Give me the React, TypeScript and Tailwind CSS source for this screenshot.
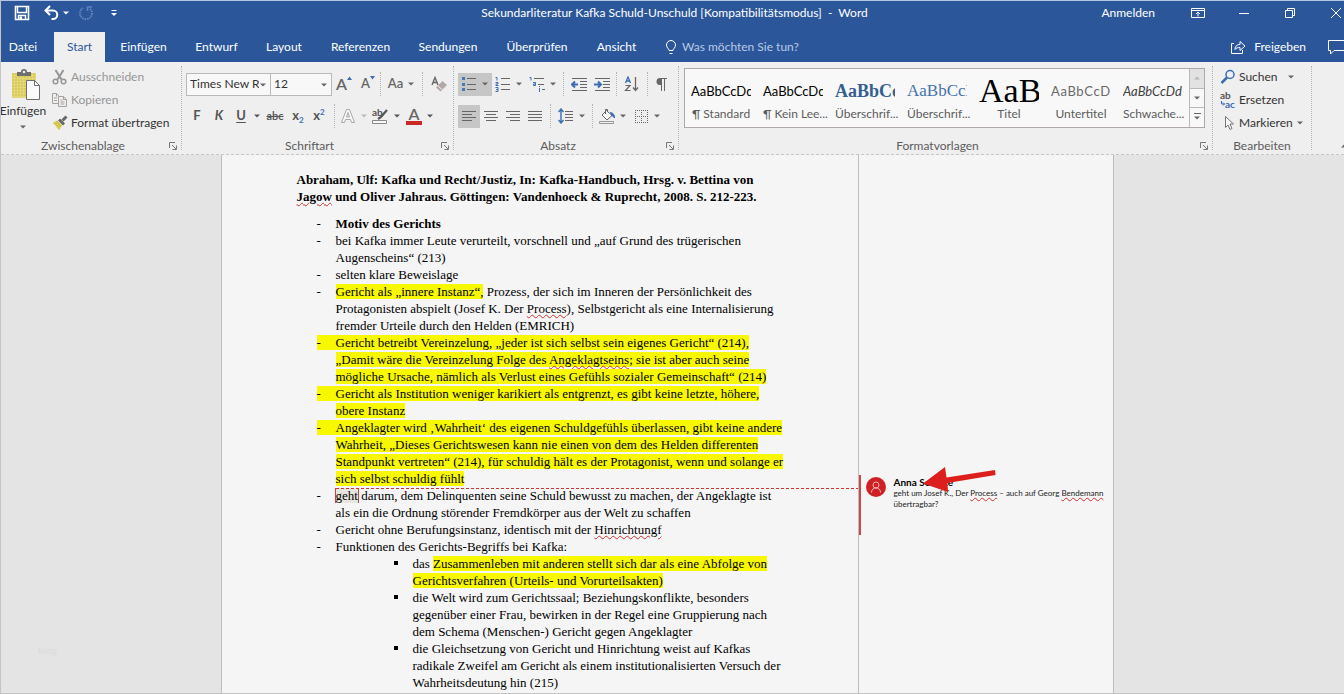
import type { ReactNode } from 'react'
import clsx from 'clsx'

// ── Small building blocks ──

function Chevron({ className }: { className?: string }) {
  return (
    <svg viewBox="0 0 8 8" className={clsx('h-2 w-2 shrink-0', className)}>
      <path d="M1 2.500h6L4 5.500z" fill="currentColor" />
    </svg>
  )
}

function Icon({ size = 16, className, children }: { size?: number; className?: string; children: ReactNode }) {
  return (
    <svg
      width={size}
      height={size}
      viewBox="0 0 16 16"
      fill="none"
      stroke="currentColor"
      strokeWidth="1"
      className={clsx('shrink-0', className)}
    >
      {children}
    </svg>
  )
}

function Divider({ className }: { className?: string }) {
  return <span className={clsx('h-6 w-0 shrink-0 border-l border-dotted border-[#b4b4b4]', className)} />
}

interface ToolProps {
  label: string
  className?: string
  active?: boolean
  children: ReactNode
}

function Tool({ label, className, active, children }: ToolProps) {
  return (
    <button
      type="button"
      aria-label={label}
      className={clsx('flex h-[23px] shrink-0 items-center justify-center', active && 'bg-[#c6c6c6]', className)}
    >
      {children}
    </button>
  )
}

/** Icon with a drop-down arrow */
function SplitTool({ label, active, children }: Omit<ToolProps, 'className'>) {
  return (
    <Tool label={label} active={active} className="w-[34px] gap-1">
      {children}
      <Chevron />
    </Tool>
  )
}

interface GroupProps {
  title: string
  launcher?: boolean
  className?: string
  children: ReactNode
}

function Group({ title, launcher = true, className, children }: GroupProps) {
  return (
    <section className={clsx('flex shrink-0 flex-col pt-[3px]', className)}>
      <div className="h-[73px]">{children}</div>
      <div className="flex h-4 items-center px-1 text-[#5c5c5c]">
        <span className={clsx('flex-1 text-center', launcher && 'pr-2')}>{title}</span>
        {launcher && (
          <button type="button" aria-label={`${title} Optionen`}>
            <svg width="8" height="8" viewBox="0 0 8 8" fill="none" stroke="#777">
              <path d="M.5 6V.5H6M3 3l4 4M7.500 3.500v4h-4" />
            </svg>
          </button>
        )}
      </div>
    </section>
  )
}

// ── Title bar ──

function TitleBar() {
  return (
    <div className="-mr-[15px] flex h-6 items-center">
      <div className="flex flex-1 items-center pl-[13px]">
        <button type="button" aria-label="Speichern">
          <Icon>
            <path d="M1.500 1.500h13v13h-13z" strokeWidth="1.600" />
            <path d="M3.500 2v5.500h9V2M4.500 14.500v-4h7v4" strokeWidth="1.400" />
            <path d="M5.500 11.500h2.500v3H5.500z" fill="currentColor" stroke="none" />
          </Icon>
        </button>
        <button type="button" aria-label="Rückgängig" className="ml-3.5 flex items-center gap-0.5">
          <Icon>
            <path d="M2 5.500h7a4 4 0 0 1 0 8.500H7.500" strokeWidth="2" />
            <path d="M6 1L1.500 5.500 6 10" strokeWidth="2" />
          </Icon>
          <Chevron />
        </button>
        <button type="button" aria-label="Wiederholen" className="ml-2 text-[#5f83bd]">
          <Icon>
            <path d="M5 3a6 6 0 1 0 6.500.3" strokeWidth="2" strokeDasharray="1.500 .8" />
            <path d="M9.500 6V2H14" strokeWidth="1.600" />
          </Icon>
        </button>
        <button type="button" aria-label="Symbolleiste anpassen" className="ml-3">
          <Icon>
            <path d="M5.500 5.500h5" />
            <path d="M5 8h6l-3 3z" fill="currentColor" stroke="none" />
          </Icon>
        </button>
      </div>
      <h1 className="mr-6 whitespace-pre">Sekundarliteratur Kafka Schuld-Unschuld [Kompatibilitätsmodus]  -  Word</h1>
      <div className="flex flex-1 items-center justify-end">
        <button type="button" className="mr-5">Anmelden</button>
        <button type="button" aria-label="Menüband-Anzeigeoptionen" className="flex w-[46px] justify-center">
          <Icon>
            <path d="M1.500 3.500h13v9h-13zM1.500 5.500h13M8 11.500v-4.500M6 9l2-2 2 2" />
          </Icon>
        </button>
        <button type="button" aria-label="Minimieren" className="flex w-[46px] justify-center">
          <Icon>
            <path d="M3 8.500h10" />
          </Icon>
        </button>
        <button type="button" aria-label="Wiederherstellen" className="flex w-[46px] justify-center">
          <Icon>
            <path d="M3.500 5.500h7v7h-7zM5.500 5.500v-2h7v7h-2" />
          </Icon>
        </button>
        <button type="button" aria-label="Schließen" className="flex w-[46px] justify-center">
          <Icon>
            <path d="M3 3l10 10M13 3L3 13" />
          </Icon>
        </button>
      </div>
    </div>
  )
}

// ── Tabs ──

const TABS = [
  { name: 'Datei', width: 'w-[53px] pr-[9px]' },
  { name: 'Start', width: 'w-[51px]' },
  { name: 'Einfügen', width: 'w-[77px]' },
  { name: 'Entwurf', width: 'w-[69px]' },
  { name: 'Layout', width: 'w-[66px]' },
  { name: 'Referenzen', width: 'w-[87px]' },
  { name: 'Sendungen', width: 'w-[88px]' },
  { name: 'Überprüfen', width: 'w-[90px]' },
  { name: 'Ansicht', width: 'w-[69px]' },
]

function TabBar() {
  return (
    <nav className="mt-[7px] flex h-[30px] items-stretch">
      {TABS.map(tab => (
        <button
          key={tab.name}
          type="button"
          className={clsx('shrink-0 text-center', tab.width, tab.name === 'Start' && 'bg-[#efefef] text-[#2b579a]')}
        >
          {tab.name}
        </button>
      ))}
      <button type="button" className="ml-3 flex items-center gap-[3px] text-[#b9c9e2]">
        <Icon className="text-white">
          <path d="M6 11.500c0-2-2.500-2.500-2.500-5.500a4.500 4.500 0 0 1 9 0c0 3-2.500 3.500-2.500 5.500zM6.500 14.500h3" />
        </Icon>
        Was möchten Sie tun?
      </button>
      <div className="-mr-[3px] flex flex-1 items-center justify-end">
        <button type="button" className="mr-[21px] flex items-center gap-2">
          <Icon>
            <path d="M4 4.500H1.500v10h11V11" />
            <path d="M5 10.500c0-3.500 2-5 5-5v-3l5 4.500-5 4.500V8.500c-2.500 0-4 .5-5 2z" />
          </Icon>
          Freigeben
        </button>
        <button type="button" aria-label="Kommentare">
          <svg width="20" height="16" viewBox="0 0 20 16" fill="none" stroke="currentColor">
            <path d="M1.500 1.500h18v10H7l-3.500 3.500v-3.500h-2z" />
          </svg>
        </button>
      </div>
    </nav>
  )
}

// ── Ribbon groups ──

function ClipboardGroup() {
  return (
    <Group title="Zwischenablage" className="w-[180px]">
      <div className="flex">
        <button type="button" className="flex w-11 shrink-0 flex-col items-center pt-1">
          <svg width="30" height="32" viewBox="0 0 30 32" className="ml-1 shrink-0">
            <path d="M2 4h24v25H2z" fill="#e3d77c" />
            <path d="M2 5h24M2 8h24M2 11h24M2 14h24M2 17h24M2 20h24M2 23h24M2 26h24" stroke="#d0bf35" strokeDasharray="2 1" />
            <path d="M7 3h4a3 3 0 0 1 6 0h4v4H7z" fill="#6f6f6f" />
            <circle cx="14" cy="3" r="1.300" fill="#efefef" />
            <path d="M16.500 11.500h8l5 5v14h-13z" fill="#fbfbfb" stroke="#6f6f6f" />
            <path d="M24.500 11.500v5h5" fill="none" stroke="#6f6f6f" />
          </svg>
          <span className="leading-5">Einfügen</span>
          <Chevron className="mt-0.5 text-[#666]" />
        </button>
        <div className="pl-[7px]">
          <button type="button" disabled className="flex h-[23px] items-center gap-[3px] whitespace-nowrap text-[#969696]">
            <Icon>
              <path d="M3.500 1l6 9.500M11.500 1L5.500 10.500" strokeWidth="2" />
              <circle cx="3.500" cy="12.500" r="2.300" strokeWidth="1.500" />
              <circle cx="11.500" cy="12.500" r="2.300" strokeWidth="1.500" />
            </Icon>
            Ausschneiden
          </button>
          <button type="button" disabled className="flex h-[23px] items-center gap-[3px] whitespace-nowrap text-[#969696]">
            <Icon className="text-[#a89f9f]">
              <path d="M6 11.500H.5v-10h4l3 3M4.500 1.500v3M2 6h3M2 8.500h3" />
              <path d="M6.500 4.500h5l3 3v7h-8zM11.500 4.500v3h3M8.500 8h2M8.500 10h4M8.500 12h4" fill="#efefef" />
            </Icon>
            Kopieren
          </button>
          <button type="button" className="flex h-[23px] items-center gap-[3px] whitespace-nowrap">
            <Icon>
              <path d="M1 8l4-2.500 5 5L7 15z" fill="#d3c244" stroke="none" />
              <path d="M2 9l4 4M3.500 7.500l4.500 5" stroke="#efe9b0" strokeDasharray="1 1" />
              <path d="M6 5.500l2-2 5 5-2 2z" fill="#666" stroke="none" />
              <path d="M10.500 5.500l4-4" stroke="#666" strokeWidth="3" />
            </Icon>
            Format übertragen
          </button>
        </div>
      </div>
    </Group>
  )
}

function FontGroup() {
  return (
    <Group title="Schriftart" className="w-[271px]">
      <div className="flex items-center pt-[7px] pl-1">
        <div className="relative h-[23px] w-[85px] border border-[#b9b9b9] bg-[#f8f8f8]">
          <select aria-label="Schriftart" className="h-full w-[72px] appearance-none overflow-hidden pl-[3px] text-clip">
            <option>Times New Roman</option>
          </select>
          <Chevron className="pointer-events-none absolute top-[7px] right-[3px] text-[#666]" />
        </div>
        <div className="relative h-[23px] w-[61px] border border-l-0 border-[#b9b9b9] bg-[#f8f8f8]">
          <select aria-label="Schriftgrad" className="h-full w-full appearance-none pl-[3px]">
            <option>12</option>
          </select>
          <Chevron className="pointer-events-none absolute top-[7px] right-[3px] text-[#666]" />
        </div>
        <Tool label="Schriftgrad vergrößern" className="w-6 text-[16px] font-semibold text-[#666]">
          A
          <svg width="5" height="4" viewBox="0 0 5 4" className="mb-3">
            <path d="M0 4l2.500-3.500L5 4z" fill="#3a6db3" />
          </svg>
        </Tool>
        <Tool label="Schriftgrad verkleinern" className="w-6 text-[13px] font-semibold text-[#666]">
          A
          <svg width="5" height="4" viewBox="0 0 5 4" className="mb-3">
            <path d="M0 0l2.500 3.500L5 0z" fill="#3a6db3" />
          </svg>
        </Tool>
        <Divider />
        <Tool label="Groß-/Kleinschreibung" className="w-[41px] gap-1 text-[13px] font-semibold text-[#666]">
          Aa
          <Chevron />
        </Tool>
        <Divider />
        <Tool label="Formatierung löschen" className="ml-1 w-[23px] text-[#666]">
          <Icon>
            <path d="M1 9L4 1.500 7 9M2 6.500h4" strokeWidth="1.400" />
            <path d="M5 11.500l6.500-6.500 4.500 4-6.500 6.500z" fill="#b3a8a6" stroke="none" />
            <path d="M6.500 9.500l4.500 4" stroke="#efefef" />
          </Icon>
        </Tool>
      </div>
      <div className="flex items-center pt-2 pl-1 text-[#555]">
        <Tool label="Fett" className="w-[22px] text-[13px] font-bold">F</Tool>
        <Tool label="Kursiv" className="w-[22px] text-[13px] font-bold italic">K</Tool>
        <Tool label="Unterstrichen" className="w-[22px] text-[13px] font-bold underline underline-offset-2">U</Tool>
        <Tool label="Unterstreichungsart" className="w-[10px]">
          <Chevron />
        </Tool>
        <Tool label="Durchgestrichen" className="w-[26px] text-[11px] font-semibold line-through">abc</Tool>
        <Tool label="Tiefgestellt" className="w-5 text-[13px] font-bold">
          x<span className="mt-2 text-[8px] text-[#3a6db3]">2</span>
        </Tool>
        <Tool label="Hochgestellt" className="w-[22px] text-[13px] font-bold">
          x<span className="mb-2 text-[8px] text-[#3a6db3]">2</span>
        </Tool>
        <Divider className="mx-1" />
        <Tool label="Texteffekte" className="w-[30px] gap-1 text-[#a8a8a8]">
          <Icon>
            <path d="M1.500 14.500L6.500 1.500h3l5 13h-3l-1-3h-5l-1 3zM6.500 9h3L8 4.500z" fill="#f8f8f8" />
          </Icon>
          <Chevron className="text-[#bbb]" />
        </Tool>
        <Tool label="Texthervorhebungsfarbe" className="w-[34px] gap-1">
          <svg width="18" height="18" viewBox="0 0 18 18" fill="none" stroke="#555" className="shrink-0">
            <text x="1" y="9" fontSize="10" fontWeight="700" fill="#555" stroke="none">ab</text>
            <path d="M16 3l-6 7-3 2" strokeWidth="2.200" />
            <path d="M1.500 13.500h14v3h-14z" stroke="#888" fill="#f8f8f8" />
          </svg>
          <Chevron />
        </Tool>
        <Tool label="Schriftfarbe" className="w-[34px] gap-1">
          <span className="flex h-[17px] w-4 items-center justify-center border-b-4 border-[#cc2727] text-[16px] leading-3 font-semibold text-[#666]">A</span>
          <Chevron />
        </Tool>
      </div>
    </Group>
  )
}

function ParagraphGroup() {
  return (
    <Group title="Absatz" className="w-[224px]">
      <div className="flex items-center pt-[7px] pl-1 text-[#666]">
        <SplitTool label="Aufzählungszeichen" active>
          <Icon>
            <path d="M6 2.500h9M6 8.500h9M6 13.500h9" />
            <path d="M1 1h3v3H1zM1 7h3v3H1zM1 12h3v3H1z" fill="#4a78b5" stroke="none" />
          </Icon>
        </SplitTool>
        <SplitTool label="Nummerierung">
          <Icon>
            <path d="M6 2.500h9M6 8.500h9M6 13.500h9" />
            <path d="M.5 1.500h1.500v3M.5 6.500h2.500v1.500H1v1.500h2.500M.5 11.500h2.500v4H.5M1 13.500h2" stroke="#3a6db3" />
          </Icon>
        </SplitTool>
        <SplitTool label="Liste mit mehreren Ebenen">
          <Icon>
            <path d="M5 2.500h10M9 8.500h6M13 13.500h3" />
            <path d="M.5 1.500h1.500v3M4 6.500h2.500v3H4.500v-1.500h2M10.500 10v1M10.500 12v4" stroke="#3a6db3" />
          </Icon>
        </SplitTool>
        <Divider className="mx-[3px]" />
        <Tool label="Einzug verkleinern" className="w-6">
          <Icon>
            <path d="M1 2.500h15M9 5.500h7M9 8.500h7M9 11.500h7M1 14.500h15" />
            <path d="M1 8.500h6M4 5.500l-3 3 3 3" stroke="#3a6db3" strokeWidth="2" />
          </Icon>
        </Tool>
        <Tool label="Einzug vergrößern" className="w-[22px]">
          <Icon>
            <path d="M1 2.500h15M9 5.500h7M9 8.500h7M9 11.500h7M1 14.500h15" />
            <path d="M0 8.500h6.500M4 5.500l3 3-3 3" stroke="#3a6db3" strokeWidth="2" />
          </Icon>
        </Tool>
        <Divider className="mx-[3px]" />
        <Tool label="Sortieren" className="w-6">
          <Icon>
            <path d="M1.500 7L4 1l2.500 6M2.500 5h3" stroke="#3a6db3" strokeWidth="1.300" />
            <path d="M1.500 9.500h4.500l-4.500 5h5" strokeWidth="1.200" />
            <path d="M11.500 1v13M9 11.500l2.500 3 2.500-3" strokeWidth="1.300" />
          </Icon>
        </Tool>
        <Divider className="mx-[3px]" />
        <Tool label="Formatierungszeichen" className="w-[22px]">
          <Icon>
            <path d="M7.500 2v13M10.500 2v13M13 2.500H6.500" />
            <path d="M7.500 2H6a3.500 3.500 0 0 0 0 7h1.500z" fill="currentColor" stroke="none" />
          </Icon>
        </Tool>
      </div>
      <div className="flex items-center pt-2 pl-1 text-[#666]">
        <Tool label="Linksbündig" active className="w-[22px]">
          <Icon>
            <path d="M1 3.500h14M1 6.500h10M1 9.500h14M1 12.500h10" />
          </Icon>
        </Tool>
        <Tool label="Zentriert" className="w-[22px]">
          <Icon>
            <path d="M1 3.500h14M3 6.500h10M1 9.500h14M3 12.500h10" />
          </Icon>
        </Tool>
        <Tool label="Rechtsbündig" className="w-[22px]">
          <Icon>
            <path d="M1 3.500h14M5 6.500h10M1 9.500h14M5 12.500h10" />
          </Icon>
        </Tool>
        <Tool label="Blocksatz" className="w-[22px]">
          <Icon>
            <path d="M1 3.500h14M1 6.500h14M1 9.500h14M1 12.500h14" />
          </Icon>
        </Tool>
        <Divider className="mx-1" />
        <SplitTool label="Zeilenabstand">
          <Icon>
            <path d="M7 3.500h8M7 6.500h8M7 9.500h8M7 12.500h8" />
            <path d="M3 1v14M.5 4L3 1l2.500 3M.5 12L3 15l2.500-3" stroke="#3a6db3" strokeWidth="1.400" />
          </Icon>
        </SplitTool>
        <Divider className="mx-[3px]" />
        <SplitTool label="Schattierung">
          <Icon>
            <path d="M3 7l4.500-4.500L13 7.500 8 12zM6.500 6V1.500h2V4" fill="#f8f8f8" />
            <path d="M11.500 4.500c3 .5 4 2.500 4 5.500-1-1-2-2-2.500-2.500z" fill="#3a6db3" stroke="#3a6db3" />
            <path d="M.5 13.500h14v2H.5z" stroke="#999" />
          </Icon>
        </SplitTool>
        <SplitTool label="Rahmen">
          <Icon>
            <path d="M2 2.500h13M2 14.500h13M2 8.500h13M2.500 2v13M14.500 2v13M8.500 2v13" strokeDasharray="1 1" />
          </Icon>
        </SplitTool>
      </div>
    </Group>
  )
}

const STYLES = [
  { name: '¶ Standard', sample: 'AaBbCcDd', className: 'text-[13px] text-black' },
  { name: '¶ Kein Lee...', sample: 'AaBbCcDd', className: 'text-[13px] text-black' },
  { name: 'Überschrif...', sample: 'AaBbCc', className: "font-['Liberation_Serif'] text-lg font-bold text-[#365f91]" },
  { name: 'Überschrif...', sample: 'AaBbCcD', className: "font-['Liberation_Serif'] text-[17px] text-[#4673ab]" },
  { name: 'Titel', sample: 'AaB', className: "font-['Liberation_Serif'] text-[34px] text-black" },
  { name: 'Untertitel', sample: 'AaBbCcDd', className: 'text-[13px] tracking-wider text-[#6a6a6a]' },
  { name: 'Schwache...', sample: 'AaBbCcDd', className: 'text-[13px] italic text-[#404040]' },
]

function StylesGroup() {
  return (
    <Group title="Formatvorlagen" className="min-w-0 flex-1">
      <div className="mt-[3px] mr-[7px] ml-[5px] flex h-[60px] border border-[#b0a8a8] bg-[#f8f8f8]">
        <div className="flex flex-1 overflow-hidden">
          {STYLES.map((style, i) => (
            <button key={i} type="button" className="w-[72px] shrink-0 px-1.5 pt-2">
              <span className={clsx('flex h-[22px] items-center overflow-hidden leading-[22px]', style.className)}>
                {style.sample}
              </span>
              <span className="block h-[22px] pt-1 whitespace-nowrap text-[#5c5c5c]">{style.name}</span>
            </button>
          ))}
        </div>
        <div className="flex w-[15px] shrink-0 flex-col border-l border-[#b9b9b9] text-[#666]">
          <button type="button" aria-label="Nach oben" className="flex flex-1 items-center justify-center bg-[#e2e2e2] text-[#b5b5b5]">
            <Chevron className="rotate-180" />
          </button>
          <button type="button" aria-label="Nach unten" className="flex flex-1 items-center justify-center border-y border-[#b9b9b9]">
            <Chevron />
          </button>
          <button type="button" aria-label="Weitere" className="flex flex-1 flex-col items-center justify-center">
            <span className="h-px w-[7px] bg-[#666]" />
            <Chevron />
          </button>
        </div>
      </div>
    </Group>
  )
}

function EditingGroup() {
  return (
    <Group title="Bearbeiten" launcher={false} className="w-[98px]">
      <div className="pl-[7px]">
        <button type="button" className="flex h-[23px] items-center gap-[3px]">
          <Icon className="text-[#3a6db3]">
            <circle cx="10" cy="5.500" r="4" strokeWidth="1.500" />
            <path d="M7 8.500L1.500 14" strokeWidth="2.500" />
          </Icon>
          Suchen
          <Chevron className="ml-1.5 text-[#666]" />
        </button>
        <button type="button" className="flex h-[23px] items-center gap-[3px]">
          <svg width="16" height="18" viewBox="0 0 16 18" className="shrink-0" fontSize="10" fontWeight="700" fill="#555">
            <text x="0" y="8">ab</text>
            <text x="5" y="17" fill="#3a6db3">ac</text>
            <path d="M1.500 10v3h3M3 11.500L4.500 13 3 14.500" fill="none" stroke="#3a6db3" />
          </svg>
          Ersetzen
        </button>
        <button type="button" className="flex h-[23px] items-center gap-[3px]">
          <Icon>
            <path d="M5.500 1.500v11l2.500-2.500 2 4.500 2-1-2-4.500h3.500z" fill="#f8f8f8" stroke="#777" />
          </Icon>
          Markieren
          <Chevron className="text-[#666]" />
        </button>
      </div>
    </Group>
  )
}

// ── Document ──

function Hl({ children }: { children: ReactNode }) {
  return <mark className="bg-[#f8f800] text-black">{children}</mark>
}

function Typo({ children }: { children: ReactNode }) {
  return <span className="underline decoration-[#d03030] decoration-wavy decoration-1 underline-offset-1">{children}</span>
}

function Item({ hl, children }: { hl?: boolean; children: ReactNode }) {
  return (
    <li className="flex">
      <span className={clsx('mt-px h-[15px] w-[19px] shrink-0 leading-[15px]', hl && 'bg-[#f8f800]')}>-</span>
      <div className="relative flex-1">{children}</div>
    </li>
  )
}

function SubItem({ children }: { children: ReactNode }) {
  return (
    <li className="flex">
      <span className="mt-1.5 mr-[15px] h-1 w-1 shrink-0 bg-black" />
      <div>{children}</div>
    </li>
  )
}

function DocumentText() {
  return (
    <article className="flex-1 pt-4 pl-[75px] font-['Liberation_Serif',serif] text-[13px] leading-[17px] whitespace-nowrap text-black">
      <p className="font-bold">
        Abraham, Ulf: Kafka und Recht/Justiz, In: Kafka-Handbuch, Hrsg. v. Bettina von<br />
        <Typo>Jagow</Typo> und Oliver Jahraus. Göttingen: Vandenhoeck &amp; Ruprecht, 2008. S. 212-223.
      </p>
      <ul className="mt-2.5 ml-5">
        <Item><b>Motiv des Gerichts</b></Item>
        <Item>
          bei Kafka immer Leute verurteilt, vorschnell und „auf Grund des trügerischen<br />
          Augenscheins“ (213)
        </Item>
        <Item>selten klare Beweislage</Item>
        <Item>
          <Hl>Gericht als „innere Instanz“,</Hl> Prozess, der sich im Inneren der Persönlichkeit des<br />
          Protagonisten abspielt (Josef K. Der <Typo>Process</Typo>), Selbstgericht als eine Internalisierung<br />
          fremder Urteile durch den Helden (EMRICH)
        </Item>
        <Item hl>
          <Hl>
            Gericht betreibt Vereinzelung, „jeder ist sich selbst sein eigenes Gericht“ (214),<br />
            „Damit wäre die Vereinzelung Folge des <Typo>Angeklagtseins</Typo>; sie ist aber auch seine<br />
            mögliche Ursache, nämlich als Verlust eines Gefühls sozialer Gemeinschaft“ (214)
          </Hl>
        </Item>
        <Item hl>
          <Hl>
            Gericht als Institution weniger karikiert als entgrenzt, es gibt keine letzte, höhere,<br />
            obere Instanz
          </Hl>
        </Item>
        <Item hl>
          <Hl>
            Angeklagter wird ‚Wahrheit‘ des eigenen Schuldgefühls überlassen, gibt keine andere<br />
            Wahrheit, „Dieses Gerichtswesen kann nie einen von dem des Helden differenten<br />
            Standpunkt vertreten“ (214), für schuldig hält es der Protagonist, wenn und solange er<br />
            sich selbst schuldig fühlt
          </Hl>
        </Item>
        <Item>
          {/* connector to the comment in the margin */}
          <span className="absolute inset-x-0 top-px h-px bg-[repeating-linear-gradient(90deg,#cc3333_0_3px,transparent_3px_5px)]" />
          <span className="-mx-px border-x border-[#cc4040] bg-[#e6e6df]">geht</span>{' '}
          darum, dem Delinquenten seine Schuld bewusst zu machen, der Angeklagte ist<br />
          als ein die Ordnung störender Fremdkörper aus der Welt zu schaffen
        </Item>
        <Item>Gericht ohne Berufungsinstanz, identisch mit der <Typo>Hinrichtungf</Typo></Item>
        <Item>Funktionen des Gerichts-Begriffs bei Kafka:</Item>
      </ul>
      <ul className="ml-[97px]">
        <SubItem>
          das <Hl>Zusammenleben mit anderen stellt sich dar als eine Abfolge von<br />
          Gerichtsverfahren (Urteils- und Vorurteilsakten)</Hl>
        </SubItem>
        <SubItem>
          die Welt wird zum Gerichtssaal; Beziehungskonflikte, besonders<br />
          gegenüber einer Frau, bewirken in der Regel eine Gruppierung nach<br />
          dem Schema (Menschen-) Gericht gegen Angeklagter
        </SubItem>
        <SubItem>
          die Gleichsetzung von Gericht und Hinrichtung weist auf Kafkas<br />
          radikale Zweifel am Gericht als einem institutionalisierten Versuch der<br />
          Wahrheitsdeutung hin (215)
        </SubItem>
      </ul>
    </article>
  )
}

function CommentMargin() {
  return (
    <aside className="w-[255px] shrink-0 border-l border-[#bdbdbd] pt-80">
      <div className="relative flex h-[60px] gap-2 border-l-2 border-[#c94a4a] pl-[5px] text-[8px] leading-[11px] text-[#222]">
        <svg width="20" height="20" viewBox="0 0 20 20" fill="none" stroke="#f3b5b5" className="mt-0.5 shrink-0">
          <circle cx="10" cy="10" r="10" fill="#cf2026" stroke="none" />
          <circle cx="10" cy="8" r="3" />
          <path d="M5.500 15.500c0-3 2-4.500 4.500-4.500s4.500 1.500 4.500 4.500" />
        </svg>
        <div className="pt-0.5 whitespace-nowrap">
          <p className="text-[10px] font-bold text-black">Anna Schulze</p>
          <p>
            geht um Josef K., Der <Typo>Process</Typo> – auch auf Georg <Typo>Bendemann</Typo><br />
            übertragbar?
          </p>
        </div>
        <svg width="74" height="26" viewBox="0 0 74 26" className="absolute -top-2 left-[62px]">
          <path d="M0 16.500L22 0l1.500 10.500L72 3l.5 5-48 8 .5 9z" fill="#dc1f1c" />
        </svg>
      </div>
    </aside>
  )
}

export default function App() {
  return (
    <div className="flex min-h-screen flex-col overflow-hidden border-t border-b border-l border-t-[#b4c6e2] border-b-[#c4c4c4] border-l-[#c4c4c4] bg-[#e4e4e4] font-['Lato',sans-serif] text-xs text-[#333]">
      <header className="bg-[#2b579a] text-white">
        <TitleBar />
        <TabBar />
      </header>
      <div className="flex h-[93px] border-b border-dashed border-[#c6c6c6] bg-[#efefef]">
        <ClipboardGroup />
        <Divider className="mt-1 h-[84px]" />
        <FontGroup />
        <Divider className="mt-1 h-[84px]" />
        <ParagraphGroup />
        <Divider className="mt-1 h-[84px]" />
        <StylesGroup />
        <Divider className="mt-1 h-[84px]" />
        <EditingGroup />
        <Divider className="mt-1 h-[84px]" />
        <div className="flex w-8 shrink-0 items-end justify-end pb-1">
          <button type="button" aria-label="Menüband reduzieren" className="-mr-1">
            <Chevron className="rotate-180 text-[#666]" />
          </button>
        </div>
      </div>
      <main className="relative flex flex-1 justify-center pr-[11px]">
        <span className="absolute bottom-9 left-[37px] text-[10px] font-bold text-[#dddddd]">blog</span>
        <div className="flex w-[893px] border-x border-[#bdbdbd] bg-[#f5f5f5]">
          <DocumentText />
          <CommentMargin />
        </div>
      </main>
    </div>
  )
}
